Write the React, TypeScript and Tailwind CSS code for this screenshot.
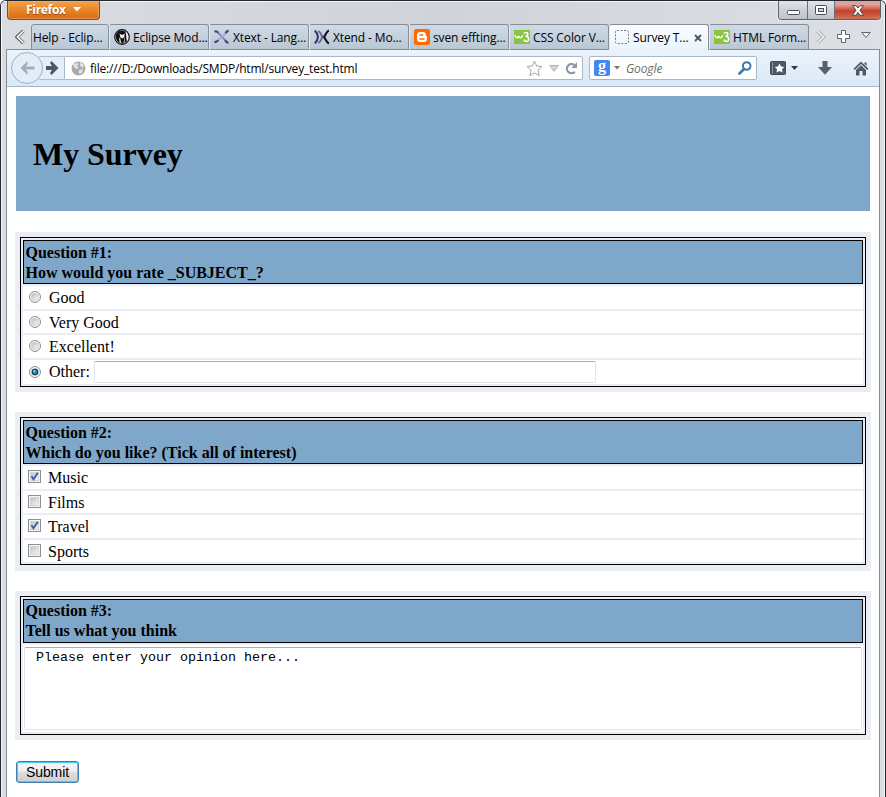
import type { ReactNode } from 'react';

const ui = "font-['Open_Sans','Noto_Sans',sans-serif]";
const serif = "font-['Liberation_Serif',serif]";

function EclipseIcon() {
  return (
    <svg width="16" height="16" viewBox="0 0 16 16">
      <circle cx="8" cy="8" r="7.300" fill="#f2f2f2" stroke="#111" strokeWidth="1.200" />
      <path d="M8 1.500C3.500 1.500 1.500 5 1.800 8.500C2 11 3.500 13 5.500 14C6.300 12.500 5 11.500 5.200 9.500L6.300 8L5.500 4.500L7.300 5.800H9L10.800 4.500L10.300 8C11.500 10 10.500 12 10.300 14.500H7.500V13L6 14.200C8 15 11.500 14.500 13 11.500C11.800 9.500 12.800 6.500 11.500 3C10.500 2 9.500 1.500 8 1.500Z" fill="#111" />
      <path d="M6 8L8.300 9.500L10.200 8L10.300 11L9.200 14.500H7.500L6.500 11Z" fill="#111" />
    </svg>
  );
}
function XtextIcon() {
  return (
    <svg width="17" height="16" viewBox="0 0 17 16" fill="none">
      <path d="M3.500 3C6 4 7 7 9 8.500C11 10 12 11 13 13" stroke="#7f83b8" strokeWidth="2" />
      <path d="M13 3C11.500 6 9 7 7.500 8.500C6 10 4.500 11.500 3 12.500" stroke="#b0a4cf" strokeWidth="2" />
      <path d="M.5 2.500C2 1.500 3.500 2 4.500 3.500M12.500 4C13 2.500 14 1.500 15.500 1.500M.5 13C2 13.500 3.500 13 4.500 11.500M12 11.500C12.500 13.500 14 14 15.500 14" stroke="#45417c" strokeWidth="2.200" />
    </svg>
  );
}
function XtendIcon() {
  return (
    <svg width="17" height="16" viewBox="0 0 17 16" fill="none">
      <path d="M.8 1.200C3 3 4 6 4.200 8C4 10 3 13 .8 14.800" stroke="#34346a" strokeWidth="2.200" />
      <path d="M4.500 1.500C7 3.500 8.500 6 8.500 8C8.500 10 7 12.500 4.500 14.500" stroke="#6b6699" strokeWidth="2" />
      <path d="M15.800 1C13 2 12.500 6 10.500 8C12.500 10 13 14 15.800 15" stroke="#101014" strokeWidth="2.200" />
    </svg>
  );
}
function BloggerIcon() {
  return (
    <svg width="16" height="16" viewBox="0 0 16 16">
      <rect width="16" height="16" rx="2.500" fill="#ff6a00" />
      <path d="M6 3H9C11 3 12 4.500 12 6.500C12 7 13 7 13 8V10C13 12 11.500 13 10 13H6C4 13 3 11.700 3 10V6C3 4 4.300 3 6 3Z" fill="#fff" />
      <path d="M6 6H8.700M6 10H10" stroke="#ff6a00" strokeWidth="1.600" strokeLinecap="round" />
    </svg>
  );
}
function W3Icon() {
  return (
    <svg width="16" height="14" viewBox="0 0 16 14" fill="none">
      <rect width="16" height="14" fill="#88c440" />
      <path d="M1 5C1.500 8.500 4 8.500 4.500 5.500C5 8.500 7.500 8.500 9 5" stroke="#fff" strokeWidth="1.400" />
      <path d="M10 3.500C12 1.500 14.800 3 13.500 5C13 6 12 6.200 11.500 6.200C15.500 6 15.500 11.500 12.500 11.500C11 11.500 10.300 10.600 10 9.500" stroke="#fff" strokeWidth="1.600" />
    </svg>
  );
}
function BlankIcon() {
  return (
    <svg width="15" height="15" viewBox="0 0 15 15">
      <rect x="1.500" y=".5" width="13" height="13" rx="1.500" fill="none" stroke="#74797f" strokeDasharray="2 1.500" />
    </svg>
  );
}

function Tab({ icon, label, active, first }: { icon?: ReactNode; label: string; active?: boolean; first?: boolean }) {
  return (
    <div
      className={`flex h-[26px] shrink-0 items-center overflow-hidden rounded-t-[3px] border-t border-r border-[#868d96] pt-px ${
        first ? 'w-[78px] border-l pl-px' : 'w-[100px] border-l border-l-[#e5ebf1] pl-[4px]'
      } ${active ? 'bg-gradient-to-b from-[#fbfdff] to-[#eaf3fc]' : 'border-b bg-gradient-to-b from-[#d0dae5] to-[#b9c7d5]'}`}
    >
      {icon && <span className="mr-[3px] flex w-4 shrink-0 items-center">{icon}</span>}
      <span className={`text-[12px] leading-4 tracking-[-0.12px] whitespace-nowrap text-black ${active ? '' : 'pt-[2px]'}`}>{label}</span>
      {active && (
        <svg className="mr-[6px] ml-auto shrink-0" width="8" height="8" viewBox="0 0 8 8">
          <path d="M1 1L7 7M7 1L1 7" stroke="#4d5359" strokeWidth="1.800" />
        </svg>
      )}
    </div>
  );
}

function TitleBar() {
  return (
    <div className="flex h-[23px] items-start justify-between">
      <div className="flex h-[19px] w-[93px] items-center rounded-b-[4px] border border-t-0 border-[#8a4a1c] bg-gradient-to-b from-[#f2a44c] via-[#e88526] to-[#d96b14] pl-[18px] text-white shadow-[inset_0_0_0_1px_#f4b56c80]">
        <span className="text-[12px] leading-4 font-bold tracking-[-0.3px] [text-shadow:0_1px_1px_#8a4a1c]">Firefox</span>
        <svg className="mb-[2px] ml-[7px]" width="8" height="5" viewBox="0 0 8 5"><path d="M0 0H8L4 4.500Z" fill="#fff" /></svg>
      </div>
      <div className="-mr-px flex h-[19px] w-[103px] overflow-hidden rounded-b-[4px] border border-t-0 border-[#5c626b] shadow-[0_0_1px_1px_#eef2f680]">
        <div className="flex w-[29px] items-center justify-center border-r border-[#6b7078] bg-gradient-to-b from-[#e2e5ea] via-[#cdd1d7] to-[#bfc4cb] pt-[5px]">
          <svg width="13" height="5" viewBox="0 0 13 5"><rect x=".5" y=".5" width="12" height="4" rx="1" fill="#fff" stroke="#4a4e5a" /></svg>
        </div>
        <div className="flex w-[27px] items-center justify-center border-r border-[#6b7078] bg-gradient-to-b from-[#e2e5ea] via-[#cdd1d7] to-[#bfc4cb]">
          <svg width="12" height="10" viewBox="0 0 12 10"><rect x=".5" y=".5" width="11" height="9" rx="1" fill="#fff" stroke="#4a4e5a" /><rect x="3.500" y="3.500" width="5" height="3" fill="#ccd0d6" stroke="#4a4e5a" /></svg>
        </div>
        <div className="flex flex-1 items-center justify-center bg-gradient-to-b from-[#dfa298] from-20% via-[#c23f28] via-55% to-[#d0705a]">
          <svg width="12" height="11" viewBox="0 0 12 11"><path d="M.7 .7H4L6 3L8 .7H11.300L8 5.300L11.500 10.300H8L6 7.500L4 10.300H.5L4 5.300Z" fill="#fff" stroke="#514453" /></svg>
        </div>
      </div>
    </div>
  );
}

function TabStrip() {
  return (
    <div className="flex h-[26px] items-center border-b border-[#868d96]">
      <svg className="ml-[9px] mr-[6px] shrink-0" width="10" height="14" viewBox="0 0 10 14"><path d="M8.500 0.800L2 7L8.500 13.200" fill="none" stroke="#5d6269" strokeWidth="3.400" /><path d="M8.500 1L2.500 7L8.500 13" fill="none" stroke="#fff" strokeWidth="1.600" /></svg>
      <Tab first label="Help - Eclip..." />
      <Tab icon={<EclipseIcon />} label="Eclipse Mod..." />
      <Tab icon={<XtextIcon />} label="Xtext - Lang..." />
      <Tab icon={<XtendIcon />} label="Xtend - Mo..." />
      <Tab icon={<BloggerIcon />} label="sven effting..." />
      <Tab icon={<W3Icon />} label="CSS Color V..." />
      <Tab active icon={<BlankIcon />} label="Survey T..." />
      <Tab icon={<W3Icon />} label="HTML Form..." />
      <div className="flex flex-1 items-center pl-[7px]">
        <svg width="10" height="14" viewBox="0 0 10 14"><path d="M1.500 1L7.500 7L1.500 13" fill="none" stroke="#a9aeb4" strokeWidth="3.400" /><path d="M1.500 1L7.500 7L1.500 13" fill="none" stroke="#f1f3f5" strokeWidth="1.600" /></svg>
        <svg className="ml-[11px]" width="13" height="13" viewBox="0 0 13 13"><path d="M4.500 .5H8.500V4.500H12.500V8.500H8.500V12.500H4.500V8.500H.5V4.500H4.500Z" fill="#fff" stroke="#5d6269" /></svg>
        <svg className="mb-[2px] ml-[11px]" width="10" height="7" viewBox="0 0 10 7"><path d="M.8 .5H9.200L5 5.500Z" fill="#fff" stroke="#5d6269" /></svg>
      </div>
    </div>
  );
}

function Toolbar() {
  return (
    <div className="flex h-[37px] items-center border-b border-[#a3b7cd] bg-gradient-to-b from-[#ebf3fc] to-[#dbe8f7]">
      <div className="z-10 ml-1 flex h-8 w-8 shrink-0 items-center justify-center rounded-full border border-[#9fb1c5] bg-[#e3edf8]">
        <svg className="mr-px" width="16" height="16" viewBox="0 0 16 16"><path d="M8.500 1L1.500 8L8.500 15V11.500L6.500 9.500H15.500V6.500H6.500L8.500 4.500Z" fill="#a3acb8" /></svg>
      </div>
      <div className="-ml-1 flex h-6 w-[25px] shrink-0 items-center justify-center border-y border-[#aebfd2] bg-[#e5eef8]">
        <svg width="14" height="14" viewBox="0 0 14 14"><path d="M6.500 0L13.500 7L6.500 14L5 12L7 9H1V5H7L5 2Z" fill="#495766" /></svg>
      </div>
      <div className="flex h-6 w-[519px] shrink-0 items-center rounded-r-[2px] border border-[#a8b8ca] bg-white pl-[6px]">
        <svg className="shrink-0" width="15" height="15" viewBox="0 0 15 15"><circle cx="7.500" cy="7.500" r="6.900" fill="#aaa" /><path d="M2 3L6 2L8 3L6 5L8 7L5 8L3 6ZM9 1L13 4L12 7L9 5ZM8 9L12 8L11 12L8 13Z" fill="#e3e3e3" /></svg>
        <span className="ml-[4px] pt-[2px] text-[12px] leading-4 tracking-[-0.19px] whitespace-nowrap">file:///D:/Downloads/SMDP/html/survey_test.html</span>
        <div className="mr-1 ml-auto flex items-center">
          <svg width="17" height="17" viewBox="0 0 17 17"><path d="M8.500 1L10.700 6L16 6.500L12 10.200L13.200 15.700L8.500 12.900L3.800 15.700L5 10.200L1 6.500L6.300 6Z" fill="#fafafa" stroke="#a5a5a5" /></svg>
          <svg className="ml-[6px]" width="10" height="7" viewBox="0 0 10 7"><path d="M.7 .5H9.300L5 6.300Z" fill="#ccd5df" stroke="#aab4bf" /></svg>
          <svg className="ml-[6px]" width="13" height="13" viewBox="0 0 13 13"><path d="M9.800 9.700A4.500 4.500 0 1 1 9.300 3.200" fill="none" stroke="#8b97a5" strokeWidth="2.200" /><path d="M6.500 6H12V.3Z" fill="#8b97a5" /></svg>
        </div>
      </div>
      <div className="ml-[6px] flex h-6 w-[168px] shrink-0 items-center rounded-[2px] border border-[#a8b8ca] bg-white pl-1">
        <div className="flex h-4 w-4 justify-center rounded-[2px] bg-[#4285f4]">
          <span className="-mt-[2px] h-4 font-['Liberation_Serif',serif] text-[16px] leading-4 font-bold text-white">g</span>
        </div>
        <svg className="ml-1" width="6" height="4" viewBox="0 0 6 4"><path d="M0 0H6L3 3.500Z" fill="#777" /></svg>
        <span className="ml-[6px] pt-[2px] text-[12px] leading-4 tracking-[-0.1px] text-[#6d6d6d] italic">Google</span>
        <svg className="mr-1 ml-auto" width="14" height="14" viewBox="0 0 14 14"><circle cx="8.700" cy="5" r="3.800" fill="none" stroke="#3977b5" strokeWidth="2" /><path d="M6 8L1.500 12.500" stroke="#3977b5" strokeWidth="2.600" strokeLinecap="round" /></svg>
      </div>
      <svg className="ml-[13px] shrink-0" width="16" height="14" viewBox="0 0 16 14"><rect x=".5" y=".5" width="15" height="13" rx="1" fill="#4d5967" stroke="#414b57" /><path d="M2.500 1V13" stroke="#8793a1" /><path d="M9.500 2.500L11 5.500L14.200 6L12 8.200L12.500 11.500L9.500 10L6.500 11.500L7 8.200L4.800 6L8 5.500Z" fill="#fff" /></svg>
      <svg className="ml-[5px] shrink-0" width="7" height="4" viewBox="0 0 7 4"><path d="M0 0H7L3.500 4Z" fill="#323b45" /></svg>
      <svg className="ml-5 shrink-0" width="14" height="14" viewBox="0 0 14 14"><path d="M4.500 0H9.500V6H14L7 13.800L0 6H4.500Z" fill="#56616e" /></svg>
      <svg className="ml-[21px] shrink-0" width="16" height="15" viewBox="0 0 16 15"><path d="M8 .5L15.500 7.800L14.300 9L8 3L1.700 9L.5 7.800ZM11.500 1.500H13.500V5L11.500 3ZM3 9L8 4.300L13 9V14.500H9.500V10H6.500V14.500H3Z" fill="#4f5a67" /></svg>
    </div>
  );
}

function Radio({ on }: { on?: boolean }) {
  return (
    <svg width="12" height="12" viewBox="0 0 12 12" className="mb-px ml-[6px] shrink-0">
      <defs><linearGradient id="radioFill" x1="0" y1="0" x2="1" y2="1"><stop offset="0" stopColor="#b8bcc0" /><stop offset="1" stopColor="#fafafa" /></linearGradient></defs>
      <circle cx="6" cy="6" r="5.500" fill="#f4f4f4" stroke="#8e8f8f" />
      <circle cx="6" cy="6" r="3.700" fill="url(#radioFill)" stroke="#c5c9cc" strokeWidth=".6" />
      {on && <><circle cx="6" cy="6" r="3.300" fill="#174361" /><circle cx="5.900" cy="5.900" r="2.100" fill="#2090c4" /><circle cx="5.200" cy="5.200" r=".9" fill="#b8e8f8" /></>}
    </svg>
  );
}
function Check({ on }: { on?: boolean }) {
  return (
    <svg width="13" height="13" viewBox="0 0 13 13" className="mb-[2px] ml-[5px] shrink-0">
      <defs><linearGradient id="checkFill" x1="0" y1="0" x2="1" y2="1"><stop offset="0" stopColor="#bcc1c7" /><stop offset="1" stopColor="#f8f8f8" /></linearGradient></defs>
      <rect x=".5" y=".5" width="12" height="12" fill="#f4f4f4" stroke="#8e8f8f" />
      <rect x="2.500" y="2.500" width="8" height="8" fill="url(#checkFill)" stroke="#d3d6da" />
      {on && <path d="M3.500 6.300L5.500 9.300L9.800 2.800" fill="none" stroke="#435a9c" strokeWidth="1.900" />}
    </svg>
  );
}

function Question({ title, text, children, pad, headPad = 'pt-[2px]' }: { title: string; text: string; children: ReactNode; pad: string; headPad?: string }) {
  return (
    <section className={`bg-[#eaeef3] px-[5px] pt-[5px] ${pad}`}>
      <div className="flex flex-col gap-[2px] border border-black p-[2px]">
        <h2 className={`h-11 border border-black bg-[#7ea7ca] px-[1.5px] text-[16px] leading-5 font-bold ${headPad}`}>
          <span className="block">{title}</span>
          <span className="block">{text}</span>
        </h2>
        {children}
      </div>
    </section>
  );
}

function Row({ h, control, gap, children }: { h: string; control: ReactNode; gap: string; children: ReactNode }) {
  return (
    <label className={`flex items-center bg-white text-[16px] leading-5 ${h} ${gap}`}>
      {control}
      {children}
    </label>
  );
}

export default function App() {
  return (
    <div className={`flex h-[797px] w-[886px] overflow-hidden rounded-t-[6px] border-x border-t border-[#25272d] bg-[#cbd0d6] ${ui}`}>
      <div className="flex w-full flex-col border-x border-t border-[#f3f5f7] bg-gradient-to-r from-[#d9dde1] via-[#cfd4d9] to-[#dce0e5] px-1">
        <div className="flex flex-1 flex-col">
          <div className="-mt-px ml-px flex flex-col">
            <TitleBar />
          </div>
          <div className="flex flex-1 flex-col border-x border-[#868b91] bg-white">
            <div className="-mx-px bg-gradient-to-r from-[#d9dde1] via-[#cfd4d9] to-[#dce0e5]"><TabStrip /></div>
            <Toolbar />
            <main className={`flex-1 px-2 pt-[9px] text-black ${serif}`}>
              <header className="mx-px flex h-[115px] items-center bg-[#7ea7ca] pl-[17px]">
                <h1 className="text-[32px] leading-9 font-bold tracking-[-0.05px]">My Survey</h1>
              </header>
              <div className="mt-[21px] flex flex-col gap-5">
                <Question title="Question #1:" text="How would you rate _SUBJECT_?" pad="pb-[5px]">
                  <Row h="h-[23px]" gap="gap-2" control={<Radio />}>Good</Row>
                  <Row h="h-[22px] pt-px" gap="gap-2" control={<Radio />}>Very Good</Row>
                  <Row h="h-[23px]" gap="gap-2" control={<Radio />}>Excellent!</Row>
                  <Row h="h-[24px]" gap="gap-2" control={<Radio on />}>
                    Other:
                    <span className="-ml-[4px] h-[22px] w-[502px] rounded-[2px] border border-[#e2e3ea] border-t-[#abadb3] bg-white" />
                  </Row>
                </Question>
                <Question title="Question #2:" text="Which do you like? (Tick all of interest)" pad="pb-[6px]">
                  <Row h="h-[23px]" gap="gap-[7px]" control={<Check on />}>Music</Row>
                  <Row h="h-[22px] pt-px" gap="gap-[7px]" control={<Check />}>Films</Row>
                  <Row h="h-[23px]" gap="gap-[7px]" control={<Check on />}>Travel</Row>
                  <Row h="h-[22px] pt-px" gap="gap-[7px]" control={<Check />}>Sports</Row>
                </Question>
                <Question title="Question #3:" text="Tell us what you think" pad="pb-[5px]" headPad="pt-px">
                  <div className="h-[87px] bg-white px-px pt-[2px]">
                    <div className="h-[83px] rounded-[2px] border border-[#e2e3ea] border-t-[#abadb3] pt-[2px] pl-[11px] font-['Liberation_Mono',monospace] text-[13.333px] leading-[15px]">Please enter your opinion here...</div>
                  </div>
                </Question>
              </div>
              <button className="mt-[21px] ml-px flex h-[22px] w-[63px] items-center justify-center rounded-[3px] border border-[#3c7fb1] bg-gradient-to-b from-[#f2f2f2] from-45% via-[#dddddd] via-50% to-[#cfcfcf] font-['Liberation_Sans',sans-serif] text-[14px] leading-4 tracking-[-0.1px] text-black shadow-[inset_0_0_0_1px_#47cdf2]">Submit</button>
            </main>
          </div>
        </div>
      </div>
    </div>
  );
}
